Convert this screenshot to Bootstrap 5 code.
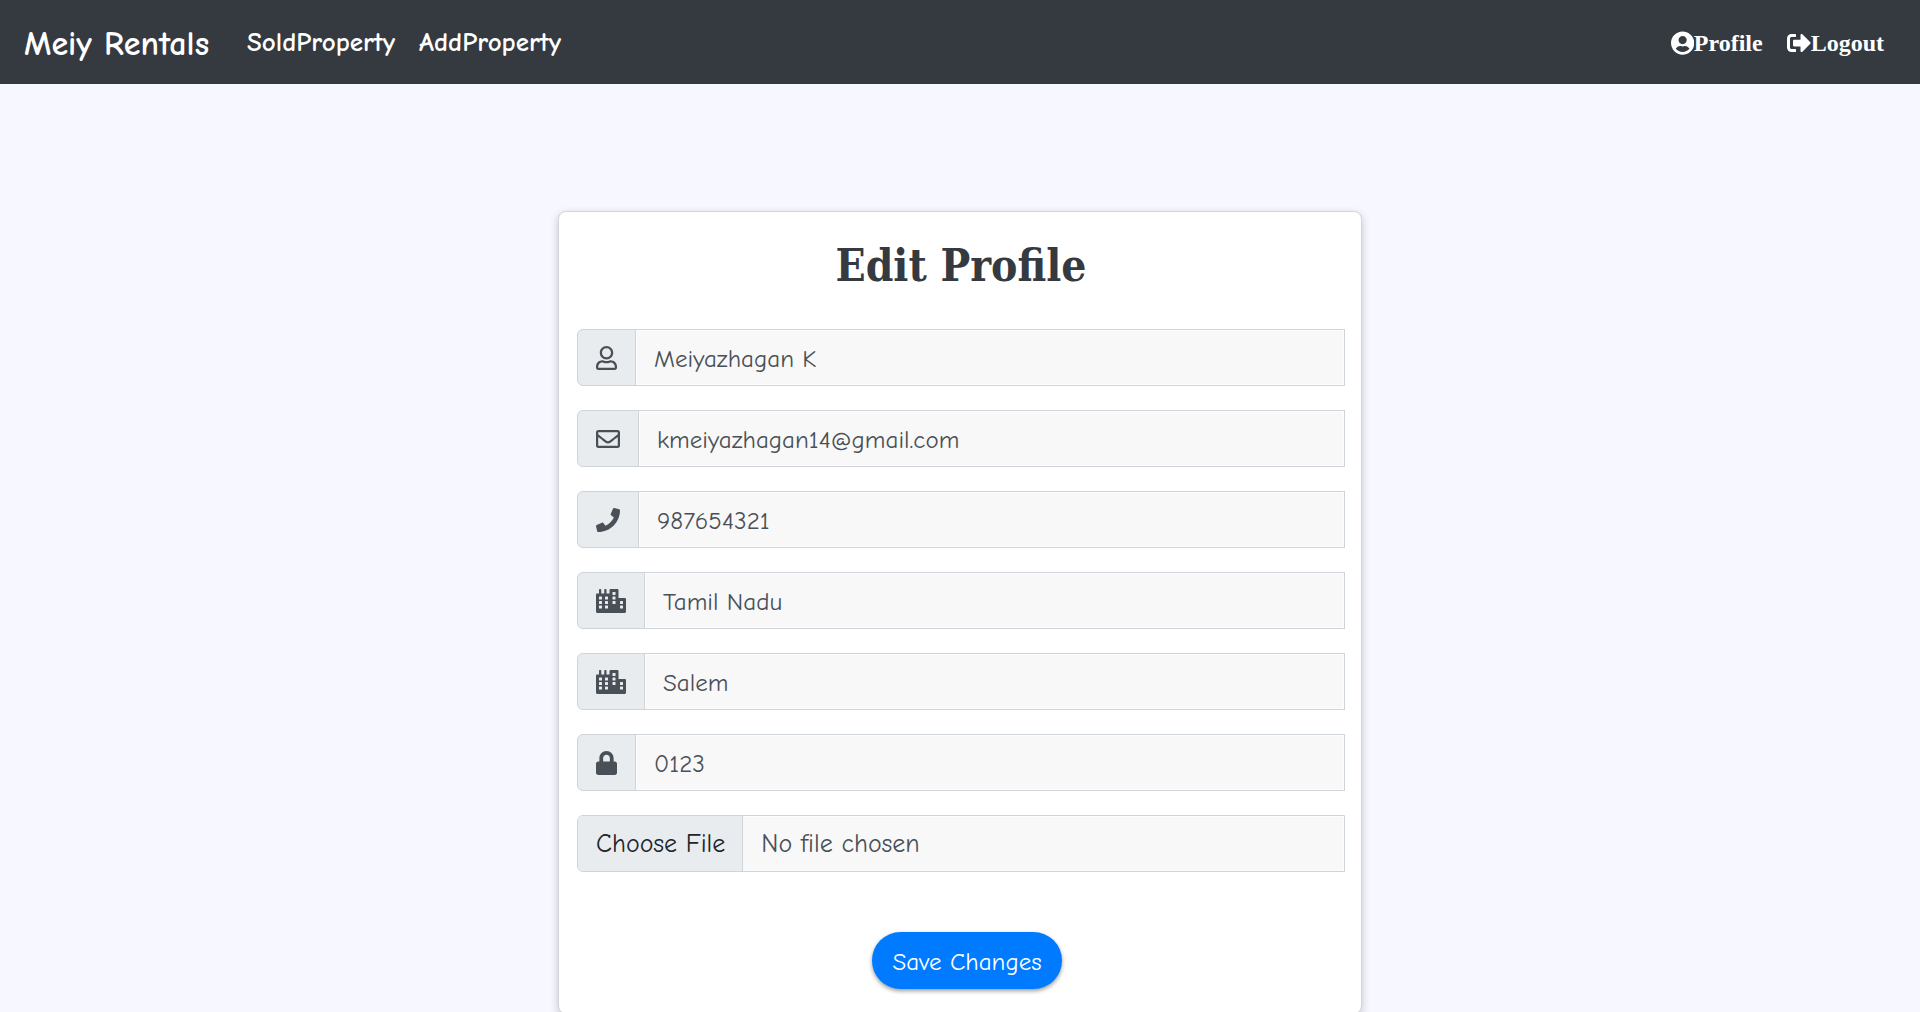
<!DOCTYPE html>
<html lang="en">
<head>
<meta charset="utf-8">
<meta name="viewport" content="width=device-width, initial-scale=1">
<title>Meiy Rentals - Edit Profile</title>
<link href="https://cdn.jsdelivr.net/npm/bootstrap@5.3.0/dist/css/bootstrap.min.css" rel="stylesheet">
<style>
  body { background: #f7f7ff; font: 25px/36px "Comic Neue", Lato, sans-serif; color: #495057; }
  .site-nav { background: #343a40; min-height: 84px; padding: 12px 24px; }
  .site-nav .navbar-brand { font-size: 34px; line-height: 48px; font-weight: 700; margin-right: 26px; padding: 8px 0 4px; }
  .site-nav .navbar-nav .nav-link { color: #fff; font-size: 27px; font-weight: 700; padding: 13px 12px 11px; }
  .site-nav .navbar-nav .account-link { font: 700 24px/36px "Liberation Serif", serif; }
  .glyph { height: 24px; display: block; fill: currentColor; flex: none; }
  .profile-card { max-width: 804px; margin: 127px auto 24px; padding: 18px 16px 24px 18px; border: 1px solid #d3d5da; border-radius: 8px; box-shadow: 0 3px 9px rgba(0, 0, 0, .2); }
  .profile-card h1 { font: 700 44px/72px "DejaVu Serif Condensed", "DejaVu Serif", serif; color: #343a40; margin-bottom: 27px; }
  .field { margin-bottom: 24px; }
  .field .input-group-text { background: #e9ecef; border-color: #ced4da; color: #495057; padding: 9px 18px; border-radius: 6px; }
  .profile-card .form-control { background: #f8f8f8; border: 1px solid #ced4da; border-radius: 0; color: #495057; font-size: 25px; font-weight: 400; line-height: 37px; padding: 10px 18px 8px; height: 57px; box-shadow: inset 0 0 0 1px #fdfdfd; }
  .profile-card .file-box { border-radius: 6px 0 0 6px; font-size: 26px; }
  .profile-card .file-box::file-selector-button { background: #e9ecef; color: #212529; padding: 10px 17px 8px 18px; margin: -10px 18px -8px -18px; border-right: 1px solid #ced4da; }
  .save-btn { background: #007bff; color: #fff; font-size: 25px; line-height: 37px; padding: 11px 18px 9px; margin: 36px 0 0 12px; border: 0; min-width: 190px; box-shadow: 0 2px 4px rgba(0, 0, 0, .4); }
</style>
</head>
<body>
<svg class="d-none" xmlns="http://www.w3.org/2000/svg">
  <symbol id="city" viewBox="0 0 640 512">
    <path d="M616 192H480V24c0-13-11-24-24-24H312c-13 0-24 11-24 24v72h-64V16c0-9-7-16-16-16h-16c-9 0-16 7-16 16v80h-64V16c0-9-7-16-16-16H80c-9 0-16 7-16 16v80H24c-13 0-24 11-24 24v360c0 18 14 32 32 32h576c18 0 32-14 32-32V216c0-13-11-24-24-24z"/>
    <g fill="#e9ecef">
      <rect x="64" y="160" width="64" height="64" rx="12"/><rect x="64" y="256" width="64" height="64" rx="12"/><rect x="64" y="352" width="64" height="64" rx="12"/>
      <rect x="192" y="160" width="64" height="64" rx="12"/><rect x="192" y="256" width="64" height="64" rx="12"/><rect x="192" y="352" width="64" height="64" rx="12"/>
      <rect x="352" y="64" width="64" height="64" rx="12"/><rect x="352" y="160" width="64" height="64" rx="12"/><rect x="352" y="256" width="64" height="64" rx="12"/>
      <rect x="512" y="256" width="64" height="64" rx="12"/><rect x="512" y="352" width="64" height="64" rx="12"/>
    </g>
  </symbol>
</svg>

<nav class="navbar navbar-expand navbar-dark site-nav">
  <a class="navbar-brand" href="#">Meiy Rentals</a>
  <ul class="navbar-nav me-auto">
    <li class="nav-item"><a class="nav-link" href="#">SoldProperty</a></li>
    <li class="nav-item"><a class="nav-link" href="#">AddProperty</a></li>
  </ul>
  <ul class="navbar-nav">
    <li class="nav-item"><a class="nav-link account-link d-flex align-items-center" href="#"><svg class="glyph" viewBox="0 0 496 512" aria-hidden="true"><path d="M248 8C111 8 0 119 0 256s111 248 248 248 248-111 248-248S385 8 248 8zm0 96c48.6 0 88 39.4 88 88s-39.4 88-88 88-88-39.4-88-88 39.4-88 88-88zm0 344c-58.7 0-111.3-26.6-146.5-68.2 18.8-35.4 55.6-59.8 98.5-59.8 2.4 0 4.8.4 7.1 1.1 13 4.2 26.6 6.9 40.9 6.9 14.3 0 28-2.7 40.9-6.9 2.3-.7 4.7-1.1 7.1-1.1 42.9 0 79.7 24.4 98.5 59.8C359.3 421.4 306.7 448 248 448z"/></svg>Profile</a></li>
    <li class="nav-item"><a class="nav-link account-link d-flex align-items-center" href="#"><svg class="glyph" viewBox="0 0 512 512" aria-hidden="true"><path d="M497 273L329 441c-15 15-41 4.5-41-17v-96H152c-13.3 0-24-10.7-24-24v-96c0-13.3 10.7-24 24-24h136V88c0-21.4 25.9-32 41-17l168 168c9.3 9.4 9.3 24.6 0 34zM192 436v-40c0-6.600-5.400-12-12-12H96c-17.700 0-32-14.300-32-32V160c0-17.700 14.300-32 32-32h84c6.600 0 12-5.400 12-12V76c0-6.600-5.400-12-12-12H96c-53 0-96 43-96 96v192c0 53 43 96 96 96h84c6.600 0 12-5.400 12-12z"/></svg>Logout</a></li>
  </ul>
</nav>

<main>
  <form class="card profile-card">
    <h1 class="text-center">Edit Profile</h1>
    <div class="input-group field">
      <label class="input-group-text" for="name" aria-label="Name"><svg class="glyph" viewBox="0 0 448 512"><path d="M313.600 304c-28.700 0-42.500 16-89.600 16-47.100 0-60.800-16-89.600-16C60.200 304 0 364.200 0 438.400V464c0 26.500 21.500 48 48 48h352c26.500 0 48-21.500 48-48v-25.600c0-74.200-60.200-134.400-134.400-134.400zM400 464H48v-25.600c0-47.600 38.800-86.400 86.400-86.400 14.600 0 38.300 16 89.600 16 51.700 0 74.900-16 89.600-16 47.600 0 86.400 38.800 86.400 86.400V464zM224 288c79.500 0 144-64.500 144-144S303.500 0 224 0 80 64.500 80 144s64.500 144 144 144zm0-240c52.900 0 96 43.100 96 96s-43.100 96-96 96-96-43.100-96-96 43.100-96 96-96z"/></svg></label>
      <input class="form-control" id="name" type="text" value="Meiyazhagan K">
    </div>
    <div class="input-group field">
      <label class="input-group-text" for="email" aria-label="Email"><svg class="glyph" viewBox="0 0 512 512"><path d="M464 64H48C21.490 64 0 85.490 0 112v288c0 26.510 21.490 48 48 48h416c26.510 0 48-21.490 48-48V112c0-26.510-21.490-48-48-48zm0 48v40.805c-22.422 18.259-58.168 46.651-134.587 106.490-16.841 13.247-50.201 45.072-73.413 44.701-23.208.375-56.579-31.459-73.413-44.701C106.180 199.465 70.425 171.067 48 152.805V112h416zM48 400V214.398c22.914 18.251 55.409 43.862 104.938 82.646 21.857 17.205 60.134 55.186 103.062 54.955 42.717.231 80.509-37.199 103.053-54.947 49.528-38.783 82.032-64.401 104.947-82.653V400H48z"/></svg></label>
      <input class="form-control" id="email" type="email" value="kmeiyazhagan14@gmail.com">
    </div>
    <div class="input-group field">
      <label class="input-group-text" for="phone" aria-label="Phone"><svg class="glyph" viewBox="0 0 512 512"><path d="M493.400 24.600l-104-24c-11.300-2.600-22.900 3.300-27.500 13.900l-48 112c-4.200 9.800-1.400 21.300 6.900 28l60.600 49.600c-36 76.700-98.900 140.500-177.200 177.200l-49.600-60.600c-6.800-8.300-18.200-11.100-28-6.900l-112 48C3.900 366.500-2 378.100.6 389.400l24 104C27.100 504.200 36.700 512 48 512c256.100 0 464-207.500 464-464 0-11.200-7.700-20.900-18.600-23.400z"/></svg></label>
      <input class="form-control" id="phone" type="tel" value="987654321">
    </div>
    <div class="input-group field">
      <label class="input-group-text" for="state" aria-label="State"><svg class="glyph" viewBox="0 0 640 512"><use href="#city"/></svg></label>
      <input class="form-control" id="state" type="text" value="Tamil Nadu">
    </div>
    <div class="input-group field">
      <label class="input-group-text" for="town" aria-label="City"><svg class="glyph" viewBox="0 0 640 512"><use href="#city"/></svg></label>
      <input class="form-control" id="town" type="text" value="Salem">
    </div>
    <div class="input-group field">
      <label class="input-group-text" for="pass" aria-label="Password"><svg class="glyph" viewBox="0 0 448 512"><path d="M400 224h-24v-72C376 68.200 307.800 0 224 0S72 68.200 72 152v72H48c-26.500 0-48 21.500-48 48v192c0 26.500 21.500 48 48 48h352c26.500 0 48-21.500 48-48V272c0-26.500-21.500-48-48-48zm-104 0H152v-72c0-39.700 32.300-72 72-72s72 32.300 72 72v72z"/></svg></label>
      <input class="form-control" id="pass" type="text" value="0123">
    </div>
    <div class="field">
      <input class="form-control file-box" type="file" aria-label="Profile picture">
    </div>
    <div class="text-center">
      <button class="btn rounded-pill save-btn" type="submit">Save Changes</button>
    </div>
  </form>
</main>
<script src="https://cdn.jsdelivr.net/npm/bootstrap@5.3.0/dist/js/bootstrap.bundle.min.js"></script>
</body>
</html>
